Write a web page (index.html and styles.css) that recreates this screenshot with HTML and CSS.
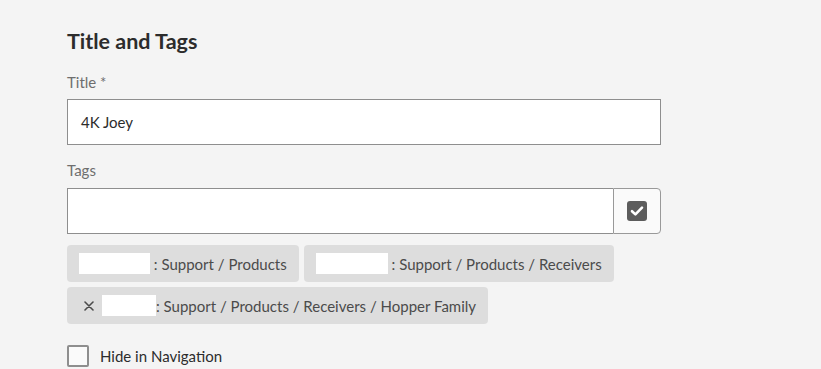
FILE: index.html
```html
<!DOCTYPE html>
<html>
<head>
<meta charset="utf-8">
<link rel="stylesheet" href="styles.css">
</head>
<body>
<div class="panel">
  <h2 class="heading">Title and Tags</h2>
  <label class="label">Title *</label>
  <div class="textfield"><span class="value">4K Joey</span></div>
  <label class="label tags-label">Tags</label>
  <div class="tagfield">
    <div class="tag-input"></div>
    <button class="tag-btn" type="button">
      <svg width="20" height="20" viewBox="0 0 20 20"><rect x="0" y="0" width="20" height="20" rx="3" fill="#5c5c5c"/><path d="M5 10.2 L8.4 13.4 L15 6.6" fill="none" stroke="#fff" stroke-width="2.6" stroke-linecap="round" stroke-linejoin="round"/></svg>
    </button>
  </div>
  <div class="chips">
    <div class="chip"><span class="redact r1"></span><span class="chip-text">&nbsp;: Support / Products</span></div>
    <div class="chip"><span class="redact r2"></span><span class="chip-text">&nbsp;: Support / Products / Receivers</span></div>
    <div class="chip"><span class="close"><svg width="10" height="10" viewBox="0 0 10 10"><path d="M1 1 L9 9 M9 1 L1 9" stroke="#4b4b4b" stroke-width="1.6" stroke-linecap="round"/></svg></span><span class="redact r3"></span><span class="chip-text">: Support / Products / Receivers / Hopper Family</span></div>
  </div>
  <div class="check-row">
    <span class="checkbox"></span>
    <span class="check-label">Hide in Navigation</span>
  </div>
</div>
</body>
</html>
```

FILE: styles.css
```css
html, body {
  margin: 0;
  padding: 0;
  background: #f4f4f4;
  font-family: "Lato", "Open Sans", sans-serif;
  color: #2c2c2c;
}
.panel {
  width: 594px;
  padding: 28px 0 0 67px;
  display: flex;
  flex-direction: column;
}
.heading {
  margin: 0;
  font-size: 21.5px;
  font-weight: 700;
  line-height: 26px;
  color: #2c2c2c;
}
.label {
  display: block;
  margin-top: 18px;
  font-size: 15px;
  line-height: 20px;
  color: #6e6e6e;
}
.tags-label { margin-top: 15px; }
.textfield {
  margin-top: 7px;
  height: 44px;
  border: 1px solid #8e8e8e;
  background: #fff;
  display: flex;
  align-items: center;
  padding-left: 13px;
}
.value {
  font-size: 15px;
  color: #2c2c2c;
}
.tagfield {
  margin-top: 8px;
  display: flex;
  height: 46px;
}
.tag-input {
  flex: 1;
  border: 1px solid #8e8e8e;
  border-right: none;
  background: #fff;
}
.tag-btn {
  width: 48px;
  padding: 0;
  border: 1px solid #999999;
  border-radius: 0 4px 4px 0;
  background: #fafafa;
  display: flex;
  align-items: center;
  justify-content: center;
}
.tag-btn svg { display: block; }
.chips {
  margin-top: 11px;
  display: flex;
  flex-wrap: wrap;
  gap: 5px;
}
.chip {
  height: 37px;
  border-radius: 4px;
  background: #dddddd;
  display: flex;
  align-items: center;
  padding: 0 12px;
  font-size: 15px;
  color: #4b4b4b;
}
.redact {
  display: inline-block;
  height: 21px;
  background: #fff;
}
.r1 { width: 71px; }
.r2 { width: 72px; }
.r3 { width: 54px; }
.close {
  display: flex;
  align-items: center;
  width: 18px;
  margin-left: 5px;
}
.close svg { display: block; }
.chip-text { white-space: nowrap; }
.check-row {
  margin-top: 21px;
  display: flex;
  align-items: center;
  gap: 11px;
}
.checkbox {
  width: 18px;
  height: 18px;
  border: 2px solid #8e8e8e;
  border-radius: 2px;
  background: #fafafa;
}
.check-label {
  font-size: 15px;
  color: #2c2c2c;
}
```
